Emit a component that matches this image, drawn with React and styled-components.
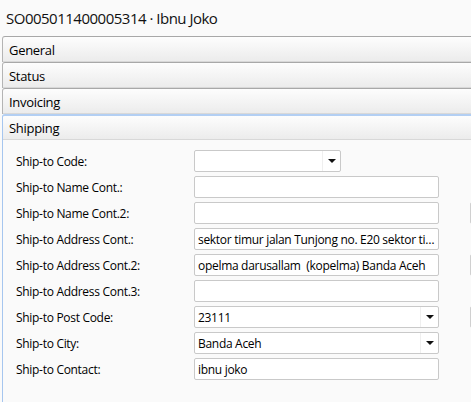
import React from 'react';
import styled, { createGlobalStyle } from 'styled-components';

const GlobalStyle = createGlobalStyle`
  html, body {
    margin: 0;
    padding: 0;
    background: #fafafa;
    overflow: hidden;
  }
  body {
    font-family: "Open Sans", "Noto Sans", "Liberation Sans", sans-serif;
    color: #000;
  }
`;

const Page = styled.div`
  width: 471px;
  height: 402px;
  overflow: hidden;
  display: flex;
  flex-direction: column;
`;

const Title = styled.div`
  height: 36px;
  flex-shrink: 0;
  padding-left: 6px;
  display: flex;
  align-items: center;
  font-size: 15px;
  letter-spacing: -0.5px;
  color: #111;
`;

const Section = styled.div`
  display: flex;
  flex-direction: column;
  margin-left: 2px;
  flex: ${p => (p.$grow ? 1 : '0 0 auto')};
`;

const Header = styled.div`
  height: 26px;
  flex-shrink: 0;
  box-sizing: border-box;
  display: flex;
  align-items: center;
  padding-left: 6px;
  font-size: 13px;
  letter-spacing: -0.3px;
  color: #000;
  border-top: ${p => (p.$active ? '2px solid #b3cff3' : '1px solid #a8a8a8')};
  border-left: 1px solid ${p => (p.$active ? '#a6c6ef' : '#b4b4b4')};
  border-top-left-radius: 3px;
  background: linear-gradient(#fdfdfd, #ebebeb);
  box-shadow: inset 0 -1px 0 #d8d8d8;
`;

const Body = styled.div`
  flex: 1;
  border-left: 1px solid #a6c6ef;
  padding: 10px 0 0 13px;
  display: flex;
  flex-direction: column;
  gap: 4px;
  overflow: hidden;
`;

const Row = styled.div`
  display: flex;
  align-items: center;
  height: 22px;
  flex-shrink: 0;
`;

const Label = styled.div`
  width: 178px;
  flex-shrink: 0;
  font-size: 12px;
  letter-spacing: -0.3px;
  color: #000;
`;

const Field = styled.div`
  height: 22px;
  width: ${p => p.$width || '245px'};
  flex-shrink: 0;
  box-sizing: border-box;
  border: 1px solid #c9c9c9;
  border-radius: 2px;
  background: #fff;
  display: flex;
  align-items: center;
  padding-left: 3px;
  font-size: 12px;
  letter-spacing: -0.3px;
  color: #000;
  overflow: hidden;
`;

const FieldText = styled.span`
  flex: 1;
  white-space: pre;
  overflow: hidden;
  text-overflow: ellipsis;
`;

const Arrow = styled.span`
  width: 17px;
  height: 100%;
  border-left: 1px solid #efefef;
  display: flex;
  align-items: center;
  justify-content: center;
  flex-shrink: 0;
  &::after {
    content: '';
    border-left: 4px solid transparent;
    border-right: 4px solid transparent;
    border-top: 4px solid #111;
  }
`;

const Side = styled.div`
  height: 22px;
  width: 245px;
  margin-left: 31px;
  flex-shrink: 0;
  box-sizing: border-box;
  border: 1px solid #d0d0d0;
  border-radius: 2px;
  background: #fff;
  visibility: ${p => (p.$show ? 'visible' : 'hidden')};
`;

const rows = [
  { label: 'Ship-to Code:', value: '', select: true, width: '147px' },
  { label: 'Ship-to Name Cont.:', value: '' },
  { label: 'Ship-to Name Cont.2:', value: '', side: true },
  { label: 'Ship-to Address Cont.:', value: 'sektor timur jalan Tunjong no. E20 sektor timur darussalam' },
  { label: 'Ship-to Address Cont.2:', value: 'opelma darusallam  (kopelma) Banda Aceh', side: true },
  { label: 'Ship-to Address Cont.3:', value: '' },
  { label: 'Ship-to Post Code:', value: '23111', select: true, side: true },
  { label: 'Ship-to City:', value: 'Banda Aceh', select: true },
  { label: 'Ship-to Contact:', value: 'ibnu joko' },
];

const sections = ['General', 'Status', 'Invoicing'];

export default function App() {
  return (
    <Page>
      <GlobalStyle />
      <Title>SO005011400005314 · Ibnu Joko</Title>
      {sections.map(s => (
        <Section key={s}>
          <Header>{s}</Header>
        </Section>
      ))}
      <Section $grow>
        <Header $active>Shipping</Header>
        <Body>
          {rows.map(r => (
            <Row key={r.label}>
              <Label>{r.label}</Label>
              <Field $width={r.width}>
                <FieldText>{r.value}</FieldText>
                {r.select && <Arrow />}
              </Field>
              <Side $show={r.side} />
            </Row>
          ))}
        </Body>
      </Section>
    </Page>
  );
}
